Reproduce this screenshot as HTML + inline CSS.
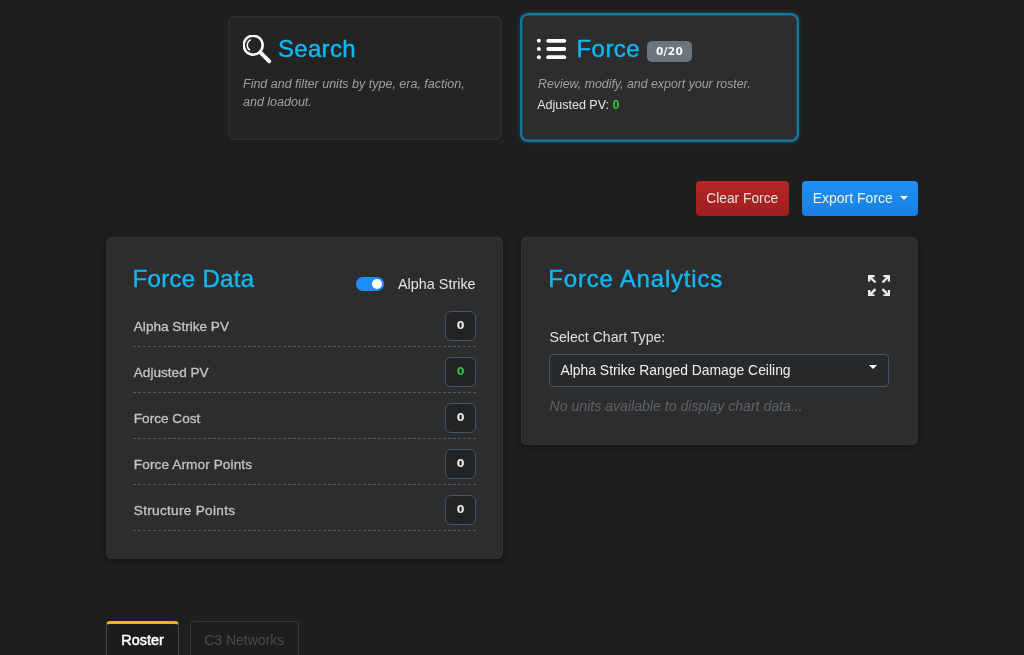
<!DOCTYPE html>
<html><head><meta charset="utf-8">
<style>
*{box-sizing:border-box;margin:0;padding:0}
html,body{width:1024px;height:655px;overflow:hidden;background:#1e1e1e;font-family:"Liberation Sans",sans-serif;color:#e0e0e0}
.abs{position:absolute}
.card1{left:227.6px;top:15.7px;width:274.4px;height:124.3px;box-shadow:inset 0 0 0 1.6px #2d2d35;border-radius:6.5px;background:#242424}
.card2{left:520.3px;top:13px;width:279px;height:128.7px;border-radius:8px;background:#2d2d2d;box-shadow:inset 0 0 0 2.4px #15769b,0 0 4px 0 rgba(20,140,190,.4)}
.h2{color:#0fb8f6;-webkit-text-stroke:.4px #0fb8f6;font-size:24px;white-space:nowrap;line-height:28px}
.desc{font-style:italic;color:#a0a0a0;font-size:12.5px;line-height:18px;white-space:nowrap}
.badge{left:647px;top:41px;width:45px;height:21px;border-radius:5px;background:#6c757d;color:#fff;font-family:"DejaVu Sans","Liberation Sans",sans-serif;font-size:10.6px;font-weight:bold;text-align:center;line-height:21px;letter-spacing:.3px}
.btn{height:35px;border-radius:4px;color:#f4f4f4;font-size:14px;line-height:35px;text-align:center;white-space:nowrap}
.panel{background:#2d2d2d;border-radius:6px;box-shadow:0 2px 6px rgba(0,0,0,.35),inset 0 0 0 1px #333}
.row{left:27px;width:343px;height:46px}.row:after{content:"";position:absolute;left:0;right:0;bottom:0;height:1px;background:repeating-linear-gradient(90deg,#4c5a68 0,#4c5a68 3px,transparent 3px,transparent 5px)}
.row .lbl{position:absolute;left:0.8px;top:17.5px;font-size:13.6px;color:#c4c4c4;-webkit-text-stroke:.3px #c4c4c4;white-space:nowrap;line-height:16px}
.row .val{position:absolute;right:0;top:10px;width:31px;height:30px;border:1px solid #435468;border-radius:6px;background:#232323;color:#eee;font-family:"DejaVu Sans","Liberation Sans",sans-serif;font-size:11px;font-weight:bold;text-align:center;line-height:28px}
</style></head><body><div id="wrap" style="will-change:transform;position:absolute;left:0;top:0;width:1024px;height:655px;overflow:hidden">
<div class="abs card1"></div>
<svg class="abs" style="left:243px;top:35px" width="30" height="30" viewBox="0 0 30 30"><circle cx="10.15" cy="10.15" r="9.5" fill="none" stroke="#fff" stroke-width="2.5"/><path d="M17.8 17.8 L26.3 26.3" stroke="#fff" stroke-width="3.8" stroke-linecap="round"/><path d="M7.4 4.9 A6 6 0 0 0 6.6 14.9" stroke="#fff" stroke-width="1.4" fill="none" stroke-linecap="round"/></svg>
<div class="abs h2" style="left:278px;top:35px;letter-spacing:.3px">Search</div>
<div class="abs desc" style="left:243px;top:75px">Find and filter units by type, era, faction,<br>and loadout.</div>

<div class="abs card2"></div>
<svg class="abs" style="left:536px;top:37px" width="32" height="24" viewBox="0 0 32 24"><g fill="#fff"><circle cx="2.9" cy="3.8" r="2"/><circle cx="2.9" cy="12" r="2"/><circle cx="2.9" cy="20.2" r="2"/><rect x="10.3" y="1.9" width="19.9" height="3.8" rx="1.9"/><rect x="10.3" y="10.1" width="19.9" height="3.8" rx="1.9"/><rect x="10.3" y="18.3" width="19.9" height="3.8" rx="1.9"/></g></svg>
<div class="abs h2" style="left:576.5px;top:35.3px;letter-spacing:.45px">Force</div>
<div class="abs badge"><span>0/20</span></div>
<div class="abs desc" style="left:538px;top:75px;font-size:12.35px">Review, modify, and export your roster.</div>
<div class="abs" style="left:537.2px;top:96.3px;font-size:12.5px;color:#e6e6e6;line-height:18px;white-space:nowrap">Adjusted PV: <span style="color:#35c435;font-weight:bold">0</span></div>
<div class="abs btn" style="left:696px;top:181px;width:92.5px;font-size:13.8px;color:#eedfdf;background:linear-gradient(#b32626,#9c1f1f)">Clear Force</div>
<div class="abs btn" style="left:802px;top:181px;width:116px;background:linear-gradient(#1e8ff5,#1a7fe0);text-align:left;padding-left:10.7px">Export Force<span class="abs" style="left:98px;top:14.5px;border-left:4px solid transparent;border-right:4px solid transparent;border-top:4px solid #fff"></span></div>

<div class="abs panel" style="left:106px;top:237px;width:397px;height:322px">
  <div class="abs h2" style="left:26.6px;top:28px;letter-spacing:.3px">Force Data</div>
  <div class="abs" style="left:250px;top:40px;width:28px;height:14px;border-radius:7px;background:#1f8efc"><span class="abs" style="right:2px;top:2px;width:10px;height:10px;border-radius:5px;background:#fff"></span></div>
  <div class="abs" style="left:292px;top:38px;font-size:14.4px;color:#e4e4e4;line-height:18px;white-space:nowrap">Alpha Strike</div>
  <div class="abs row" style="top:64px"><span class="lbl">Alpha Strike PV</span><span class="val">0</span></div>
  <div class="abs row" style="top:110px"><span class="lbl">Adjusted PV</span><span class="val" style="color:#35c435">0</span></div>
  <div class="abs row" style="top:156px"><span class="lbl">Force Cost</span><span class="val">0</span></div>
  <div class="abs row" style="top:202px"><span class="lbl" style="letter-spacing:.11px">Force Armor Points</span><span class="val">0</span></div>
  <div class="abs row" style="top:248px"><span class="lbl" style="letter-spacing:.3px">Structure Points</span><span class="val">0</span></div>
</div>

<div class="abs panel" style="left:520.7px;top:237px;width:397px;height:207.5px">
  <div class="abs h2" style="left:27.6px;top:28.3px;letter-spacing:.8px">Force Analytics</div>
  <svg class="abs" style="left:347.2px;top:37.6px" width="22" height="21.6" viewBox="0 0 22 21.6" fill="none" stroke="#ececec" stroke-width="2.4" stroke-linecap="butt" stroke-linejoin="miter"><path d="M1.05 6.6V1.05H6.6M1.2 1.2L7.5 7.5M15.4 1.05H20.95V6.6M20.8 1.2L14.5 7.5M1.05 15V20.55H6.6M1.2 20.4L7.5 14.1M20.95 15V20.55H15.4M20.8 20.4L14.5 14.1"/></svg>
  <div class="abs" style="left:28.9px;top:91px;font-size:14.1px;color:#e0e0e0;line-height:18px;white-space:nowrap">Select Chart Type:</div>
  <div class="abs" style="left:28.8px;top:117px;width:340px;height:33px;border:1px solid #435466;border-radius:4px;background:#292929;font-size:13.9px;color:#f0f0f0;line-height:31px;padding-left:10px;white-space:nowrap">Alpha Strike Ranged Damage Ceiling<span class="abs" style="right:11px;top:9.8px;border-left:4.5px solid transparent;border-right:4.5px solid transparent;border-top:4.5px solid #fff"></span></div>
  <div class="abs" style="left:28.9px;top:160px;font-size:14.1px;font-style:italic;color:#5c636b;line-height:18px;white-space:nowrap">No units available to display chart data...</div>
</div>

<div class="abs" style="left:106px;top:621px;width:73px;height:40px;border:1px solid #3b4855;border-top:3px solid #f0b41e;border-radius:4px 4px 0 0;background:#1c1c1c;color:#fff;font-size:14.4px;-webkit-text-stroke:.5px #fff;text-align:center;line-height:32px">Roster</div>
<div class="abs" style="left:189.5px;top:621px;width:109.5px;height:40px;border:1px solid #32363b;border-radius:4px 4px 0 0;color:#474b50;font-size:14px;text-align:center;line-height:36px">C3 Networks</div>
</div></body></html>
